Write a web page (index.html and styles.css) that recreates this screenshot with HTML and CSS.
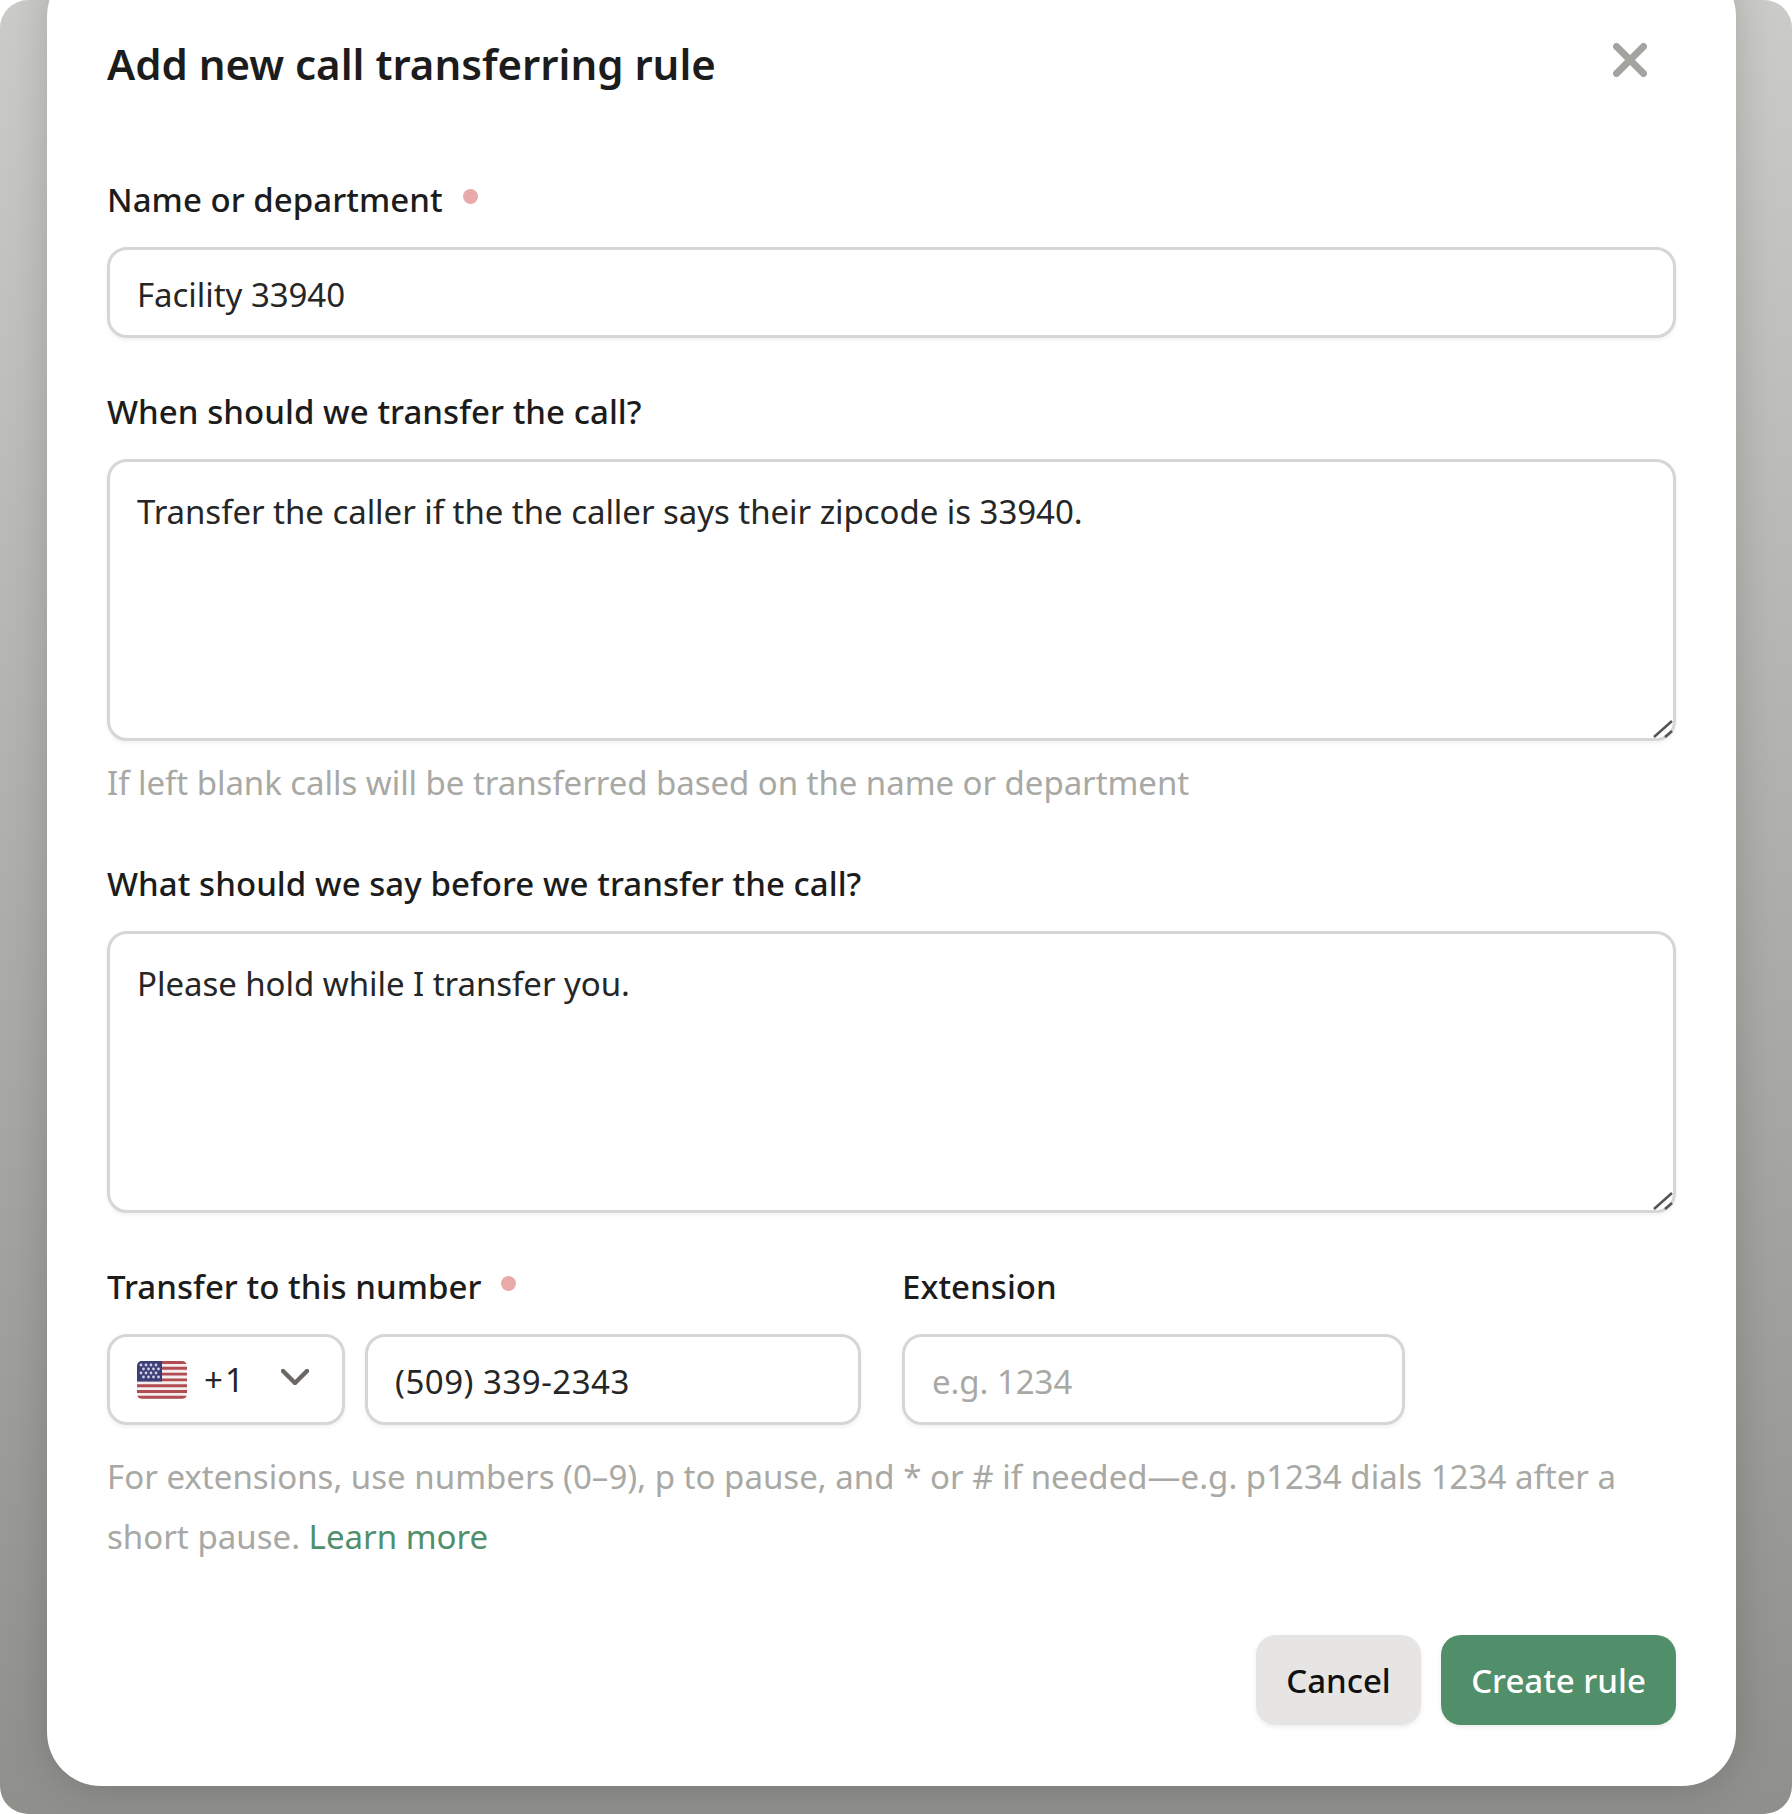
FILE: index.html
```html
<!DOCTYPE html>
<html lang="en">
<head>
  <meta charset="UTF-8">
  <title>Add new call transferring rule</title>
  <meta name="viewport" content="width=device-width, initial-scale=1.0">
  <link rel="stylesheet" href="styles.css">
</head>
<body>
  <div class="backdrop">
    <div class="modal">
      <header class="modal-head">
        <h2>Add new call transferring rule</h2>
        <button class="close-btn" title="Close">
          <svg viewBox="0 0 34 34" width="34" height="34"><path d="M3.5 3.5 30.5 30.5M30.5 3.5 3.5 30.5"/></svg>
        </button>
      </header>

      <div class="label first">Name or department<span class="req"></span></div>
      <div class="input">Facility 33940</div>

      <div class="label">When should we transfer the call?</div>
      <div class="input area">
        Transfer the caller if the the caller says their zipcode is 33940.
        <svg class="grip" viewBox="0 0 20 18" width="20" height="18"><path d="M1 17 19 1M12 17 19 11"/></svg>
      </div>
      <div class="hint">If left blank calls will be transferred based on the name or department</div>

      <div class="label after-hint">What should we say before we transfer the call?</div>
      <div class="input area">
        Please hold while I transfer you.
        <svg class="grip" viewBox="0 0 20 18" width="20" height="18"><path d="M1 17 19 1M12 17 19 11"/></svg>
      </div>

      <div class="number-row">
        <div>
          <div class="label">Transfer to this number<span class="req"></span></div>
          <div class="phone">
            <div class="input country">
              <svg class="flag" viewBox="0 0 50 38" width="50" height="38">
                <defs><clipPath id="flagClip"><rect width="50" height="38" rx="5"/></clipPath></defs>
                <g clip-path="url(#flagClip)">
                  <rect width="50" height="38" fill="#f4eeee"/>
                  <path d="M0 1.5H50M0 7.3H50M0 13.1H50M0 18.9H50M0 24.7H50M0 30.5H50M0 36.3H50" stroke="#b04c52" stroke-width="2.9"/>
                  <rect width="25" height="20.5" fill="#3c3f77"/>
                  <g fill="#cfd0e2">
                    <circle cx="4" cy="4" r="1.4"/><circle cx="9" cy="4" r="1.4"/><circle cx="14" cy="4" r="1.4"/><circle cx="19" cy="4" r="1.4"/>
                    <circle cx="6.5" cy="8" r="1.4"/><circle cx="11.5" cy="8" r="1.4"/><circle cx="16.5" cy="8" r="1.4"/><circle cx="21.5" cy="8" r="1.4"/>
                    <circle cx="4" cy="12" r="1.4"/><circle cx="9" cy="12" r="1.4"/><circle cx="14" cy="12" r="1.4"/><circle cx="19" cy="12" r="1.4"/>
                    <circle cx="6.5" cy="16" r="1.4"/><circle cx="11.5" cy="16" r="1.4"/><circle cx="16.5" cy="16" r="1.4"/><circle cx="21.5" cy="16" r="1.4"/>
                  </g>
                </g>
              </svg>
              <span class="dial">+1</span>
              <svg class="chevron" viewBox="0 0 28 16" width="28" height="16"><path d="M2 2 14 14 26 2"/></svg>
            </div>
            <div class="input tel">(509) 339-2343</div>
          </div>
        </div>
        <div>
          <div class="label">Extension</div>
          <div class="input placeholder">e.g. 1234</div>
        </div>
      </div>
      <div class="hint long">For extensions, use numbers (0–9), p to pause, and * or # if needed—e.g. p1234 dials 1234 after a short pause. <a href="#">Learn more</a></div>

      <footer class="modal-foot">
        <button class="btn cancel">Cancel</button>
        <button class="btn primary">Create rule</button>
      </footer>
    </div>
  </div>
</body>
</html>
```

FILE: styles.css
```css
* {
  box-sizing: border-box;
}

body {
  margin: 0;
  background: #fff;
  font-family: "Noto Sans", "Open Sans", sans-serif;
  color: #262626;
}

.backdrop {
  height: 1814px;
  padding: 0 56px 28px 47px;
  border-radius: 28px;
  overflow: hidden;
  background: linear-gradient(180deg, #cbcbc8 0%, #8f8f8b 100%);
}

.modal {
  height: 1824px;
  margin-top: -38px;
  padding: 77px 60px 60px;
  background: #fff;
  border-radius: 54px;
  box-shadow: 0 0 40px rgba(0, 0, 0, .18);
}

.modal-head {
  display: flex;
  align-items: flex-start;
  justify-content: space-between;
  height: 50px;
}

.modal-head h2 {
  margin: 0;
  font-size: 42px;
  line-height: 50px;
  font-weight: 600;
  color: #1c1c1c;
}

.close-btn {
  margin: 4px 29px 0 0;
  padding: 0;
  border: none;
  background: none;
  width: 34px;
  height: 34px;
}

.close-btn svg {
  display: block;
  fill: none;
  stroke: #a3a3a0;
  stroke-width: 7;
  stroke-linecap: round;
}

.label {
  display: flex;
  align-items: center;
  height: 44px;
  margin: 51px 0 26px;
  font-size: 33px;
  font-weight: 550;
  letter-spacing: .05px;
  color: #1c1c1c;
}

.label.first {
  margin-top: 88px;
}

.label.after-hint {
  margin-top: 48px;
}

.req {
  width: 15px;
  height: 15px;
  margin: -6px 0 0 20px;
  border-radius: 50%;
  background: #e9a9a8;
}

.input {
  position: relative;
  display: flex;
  align-items: center;
  height: 91px;
  padding: 3px 27px 0;
  background: #fff;
  border: 3px solid #d6d6d4;
  border-radius: 20px;
  box-shadow: 0 2px 4px rgba(0, 0, 0, .06);
  font-size: 33px;
  letter-spacing: -.05px;
}

.input.area {
  display: block;
  height: 282px;
  padding: 28px 27px;
  line-height: 44px;
}

.grip {
  position: absolute;
  right: 0;
  bottom: 0;
  fill: none;
  stroke: #555;
  stroke-width: 2.5;
}

.placeholder {
  color: #a8a8a4;
}

.hint {
  margin-top: 12px;
  font-size: 33px;
  line-height: 60px;
  letter-spacing: -.05px;
  color: #a8a8a4;
}

.hint.long {
  margin-top: 22px;
  letter-spacing: .02px;
}

.hint a {
  color: #4f8f6b;
  text-decoration: none;
}

.number-row {
  display: grid;
  grid-template-columns: 754px 503px;
  column-gap: 41px;
}

.phone {
  display: flex;
  gap: 20px;
}

.country {
  width: 238px;
  flex: none;
  padding: 0 0 0 27px;
}

.flag {
  flex: none;
}

.dial {
  margin-left: 17px;
  letter-spacing: 2px;
}

.chevron {
  margin-left: 35px;
  margin-top: -5px;
  fill: none;
  stroke: #6b6763;
  stroke-width: 4.5;
  stroke-linecap: round;
  stroke-linejoin: round;
}

.tel {
  flex: 1;
  letter-spacing: .5px;
}

.modal-foot {
  display: flex;
  justify-content: flex-end;
  gap: 20px;
  margin-top: 68px;
}

.btn {
  height: 90px;
  border: none;
  border-radius: 20px;
  padding: 0;
  font-family: inherit;
  font-size: 33px;
  font-weight: 550;
  box-shadow: 0 2px 5px rgba(0, 0, 0, .08);
}

.cancel {
  width: 165px;
  background: #e6e5e4;
  color: #111;
}

.primary {
  width: 235px;
  background: #518f6a;
  color: #fff;
}
```
